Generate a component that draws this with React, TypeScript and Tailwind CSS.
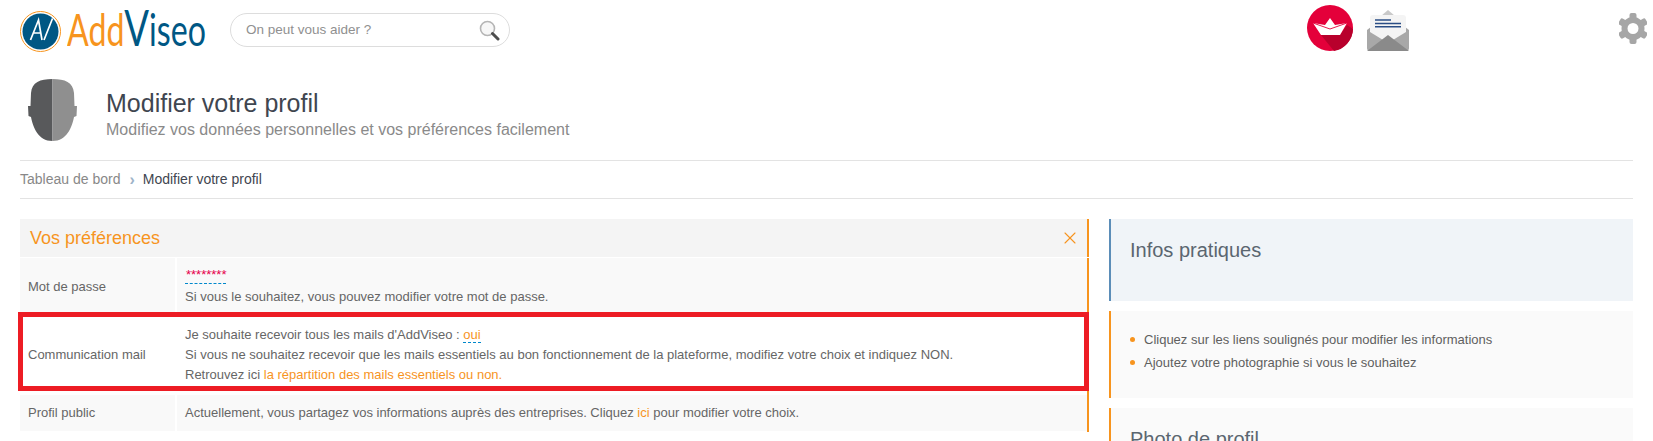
import React from 'react';
import { X } from 'lucide-react';

const sans = "font-['Liberation_Sans',Arial,sans-serif]";

const LogoMark = () => (
  <svg width="41" height="41" viewBox="0 0 41 41">
    <circle cx="20.5" cy="20.5" r="20" fill="#fff" stroke="#f7941e" strokeWidth="1" />
    <circle cx="20.5" cy="20.5" r="18" fill="#005784" />
    <path d="M10.5 29 L18.5 9 L22 29 M14 22 L21 22 M24 29 L32.5 7.5" fill="none" stroke="#fff" strokeWidth="1.7" />
  </svg>
);

const Magnifier = () => (
  <svg width="21" height="21" viewBox="0 0 21 21">
    <circle cx="8.5" cy="8.5" r="7" fill="#f7f7f7" stroke="#b5b5b5" strokeWidth="1.6" />
    <path d="M13.5 13.5 L19 19" stroke="#4d4d4d" strokeWidth="3" strokeLinecap="round" />
  </svg>
);

const BoatIcon = () => (
  <svg width="46" height="46" viewBox="0 0 46 46">
    <circle cx="23" cy="23" r="23" fill="#e4003a" />
    <path d="M14 30 L33 30 L40 20 L46 24 A23 23 0 0 1 27 46 Z" fill="#b8002c" />
    <path d="M6 18 L18 20 L23 13 L28 20 L40 18 L33 30 L14 30 Z" fill="#fff" />
    <path d="M6 18 L23 24 L40 18" fill="none" stroke="#e4003a" strokeWidth="0.9" />
  </svg>
);

const MailIcon = () => (
  <svg width="42" height="41" viewBox="0 0 42 41">
    <path d="M0 20 L21 4 L42 20 L42 38 A3 3 0 0 1 39 41 L3 41 A3 3 0 0 1 0 38 Z" fill="#a8a8a8" />
    <path d="M14 6 L21 0 L28 6 Z" fill="#c9c9c9" />
    <path d="M3 8 A3 3 0 0 1 6 5 L36 5 A3 3 0 0 1 39 8 L39 22 L21 33 L3 22 Z" fill="#f4f4f4" />
    <path d="M8 10 H24 M8 13.5 H34 M8 16.8 H34" stroke="#2a4d85" strokeWidth="1.5" />
    <path d="M0 41 L21 25 L42 41 Z" fill="#8a8a8a" />
  </svg>
);

const GearIcon = () => (
  <svg width="28" height="31" viewBox="0 0 28 31">
    {[0, 60, 120, 180, 240, 300].map((angle) => (
      <rect key={angle} x="10.5" y="0" width="7" height="8" rx="2" fill="#a6a6a6" transform={`rotate(${angle} 14 15.5)`} />
    ))}
    <circle cx="14" cy="15.5" r="8.5" fill="none" stroke="#a6a6a6" strokeWidth="6" />
  </svg>
);

const HeadIcon = () => (
  <svg width="49" height="62" viewBox="0 0 49 62">
    <path d="M24.5 0 C12 0 4 3 3 14 L2.5 27 L0 27 L0.5 37 L3 38 C5 48 10 62 24.5 62 Z" fill="#58595b" />
    <path d="M24.5 0 C37 0 45 3 46 14 L46.5 27 L49 27 L48.5 37 L46 38 C44 48 39 62 24.5 62 Z" fill="#8f8f8f" />
  </svg>
);

const Row = ({ label, children, className = '', labelClass = '' }: { label: string; children: React.ReactNode; className?: string; labelClass?: string }) => (
  <div className={`flex gap-[2px] ${className}`}>
    <div className={`w-[155px] shrink-0 bg-[#f9f9f9] pl-[8px] flex items-center ${labelClass}`}>{label}</div>
    <div className="flex-1 bg-[#f9f9f9] pl-[8px] flex flex-col justify-center">{children}</div>
  </div>
);

export default function App() {
  return (
    <div className={`${sans} h-[441px] w-[1653px] overflow-hidden bg-white text-[13px] text-[#666]`}>
      {/* top bar */}
      <div className="flex h-[60px] items-start pl-[20px] pr-[6px]">
        <div className="mt-[11px]"><LogoMark /></div>
        <div className="ml-[6px] h-[50px] w-[139px]">
          <div className="mt-[2px] w-max origin-left scale-x-[0.73] whitespace-nowrap font-['Lato',sans-serif] text-[44px] leading-[50px] text-[#f7941e]">
            Add<span className="text-[50px] text-[#005784]">V</span><span className="text-[#005784]">iseo</span>
          </div>
        </div>
        <div className="ml-[24px] mt-[13px] flex h-[34px] w-[280px] items-center justify-between rounded-full border border-[#ddd] pl-[15px] pr-[9px]">
          <span className="text-[13.5px] text-[#909090]">On peut vous aider ?</span>
          <Magnifier />
        </div>
        <div className="flex-1" />
        <div className="mt-[5px] mr-[14px]"><BoatIcon /></div>
        <div className="mt-[10px] mr-[210px]"><MailIcon /></div>
        <div className="mt-[13px]"><GearIcon /></div>
      </div>

      <div className="pl-[20px] pr-[20px]">
        {/* page title */}
        <div className="flex h-[100px] items-start">
          <div className="ml-[8px] mt-[19px]"><HeadIcon /></div>
          <div className="ml-[29px] mt-[29px]">
            <h1 className="text-[25px] leading-[28px] text-[#3f4650]">Modifier votre profil</h1>
            <p className="mt-[3px] text-[16px] leading-[20px] text-[#8a8a8a]">Modifiez vos données personnelles et vos préférences facilement</p>
          </div>
        </div>

        {/* breadcrumb */}
        <div className="flex h-[39px] items-center border-y border-[#e3e3e3] text-[14px]">
          <span className="text-[#888]">Tableau de bord</span>
          <span className="ml-[9px] mr-[8px] text-[16px] font-bold leading-[16px] text-[#9db3c8]">›</span>
          <span className="text-[#3f4650]">Modifier votre profil</span>
        </div>

        <div className="mt-[20px] flex gap-[20px]">
          {/* left column */}
          <div className="w-[1069px] shrink-0">
            <div className="flex h-[38px] items-center justify-between border-r-2 border-[#f7941e] bg-[#f4f4f4] pl-[10px] pr-[7px]">
              <h2 className="text-[18px] text-[#f7941e]">Vos préférences</h2>
              <X size={20} strokeWidth={1.3} className="text-[#f7941e]" />
            </div>
            <div className="mt-[1px] h-[174px] border-r-2 border-[#f7941e]">
              <Row label="Mot de passe" className="h-[54px]" labelClass="pt-[4px]">
                <span className="mt-[2px] w-[41px] border-b border-dashed border-[#0088cc] pb-[1px] pl-[1px] text-[13px] leading-[14px] text-[#e6004c]">********</span>
                <span className="mt-[4px] leading-[17px]">Si vous le souhaitez, vous pouvez modifier votre mot de passe.</span>
              </Row>
              <div className="-ml-[2px] -mr-[2px] flex h-[79px] items-center border-[5px] border-[#ed1c24] bg-white pt-[6px]">
                <div className="w-[157px] shrink-0 pl-[5px]">Communication mail</div>
                <div className="flex flex-col pl-[5px] leading-[20px]">
                  <div>
                    Je souhaite recevoir tous les mails d'AddViseo :{' '}
                    <span className="border-b border-dashed border-[#0088cc] text-[#f7941e]">oui</span>
                  </div>
                  <div>Si vous ne souhaitez recevoir que les mails essentiels au bon fonctionnement de la plateforme, modifiez votre choix et indiquez NON.</div>
                  <div>
                    Retrouvez ici <span className="text-[#f7941e]">la répartition des mails essentiels ou non.</span>
                  </div>
                </div>
              </div>
              <Row label="Profil public" className="mt-[4px] h-[36px]">
                <div>
                  Actuellement, vous partagez vos informations auprès des entreprises. Cliquez{' '}
                  <span className="text-[#f7941e]">ici</span> pour modifier votre choix.
                </div>
              </Row>
            </div>
          </div>

          {/* right column */}
          <div className="flex-1">
            <div className="h-[82px] border-l-2 border-[#5b8db8] bg-[#f0f4f8] pl-[19px] pt-[19px]">
              <h2 className="text-[20px] leading-[24px] text-[#5b6670]">Infos pratiques</h2>
            </div>
            <div className="mt-[10px] h-[87px] border-l-2 border-[#f7941e] bg-[#fafafa] pl-[19px] pt-[20px]">
              <ul className="flex flex-col gap-[6px]">
                {['Cliquez sur les liens soulignés pour modifier les informations', 'Ajoutez votre photographie si vous le souhaitez'].map((item) => (
                  <li key={item} className="flex items-center gap-[9px] leading-[17px] text-[#5f5f5f]">
                    <span className="h-[5px] w-[5px] rounded-full bg-[#f7941e]" />
                    {item}
                  </li>
                ))}
              </ul>
            </div>
            <div className="mt-[10px] h-[80px] border-l-2 border-[#f7941e] bg-[#fafafa] pl-[19px] pt-[19px]">
              <h2 className="text-[20px] leading-[24px] text-[#5b6670]">Photo de profil</h2>
            </div>
          </div>
        </div>
      </div>
    </div>
  );
}
